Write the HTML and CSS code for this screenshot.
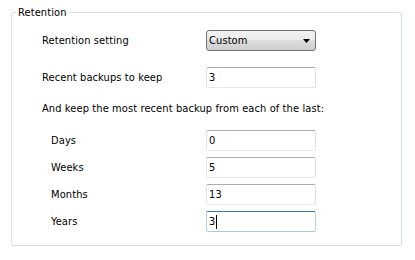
FILE: index.html
```html
<!DOCTYPE html>
<html lang="en">
<head>
    <meta charset="UTF-8">
    <title>Retention</title>
    <link rel="stylesheet" href="styles.css">
</head>
<body>
    <fieldset class="group">
        <legend class="group-title">Retention</legend>
        <div class="group-body">
            <div class="row">
                <span class="row-label">Retention setting</span>
                <div class="combo">
                    <span class="combo-text">Custom</span>
                    <svg class="combo-arrow" width="7" height="4" viewBox="0 0 7 4"><path d="M0 0h7L3.5 4z" fill="#000"/></svg>
                </div>
            </div>
            <div class="row row-gap">
                <span class="row-label">Recent backups to keep</span>
                <div class="field"><span>3</span></div>
            </div>
            <div class="note">And keep the most recent backup from each of the last:</div>
            <div class="sub-rows">
                <div class="row sub">
                    <span class="row-label">Days</span>
                    <div class="field"><span>0</span></div>
                </div>
                <div class="row sub">
                    <span class="row-label">Weeks</span>
                    <div class="field"><span>5</span></div>
                </div>
                <div class="row sub">
                    <span class="row-label">Months</span>
                    <div class="field"><span>13</span></div>
                </div>
                <div class="row sub">
                    <span class="row-label">Years</span>
                    <div class="field focused"><span>3</span><span class="caret"></span></div>
                </div>
            </div>
        </div>
    </fieldset>
</body>
</html>
```

FILE: styles.css
```css
* {
    margin: 0;
    padding: 0;
    box-sizing: border-box;
}

body {
    font-family: 'DejaVu Sans Condensed', 'DejaVu Sans', sans-serif;
    font-size: 11px;
    letter-spacing: 0.1px;
    color: #000;
    background: #fff;
    padding: 6px 0 0 11px;
    width: 415px;
    height: 260px;
}

.group {
    width: 391px;
    border: 1px solid #d5dfe5;
    border-radius: 3px;
    padding: 0;
}

.group-title {
    margin-left: 4px;
    padding: 0 2px;
    line-height: 13px;
}

.group-body {
    padding: 11px 0 13px 30px;
}

.row {
    display: flex;
    align-items: center;
    height: 21px;
}

.row-label {
    width: 164px;
    flex: none;
}

.row-gap {
    margin-top: 16px;
}

.note {
    height: 21px;
    line-height: 21px;
    margin-top: 10px;
}

.sub-rows {
    margin-top: 11px;
    display: flex;
    flex-direction: column;
    gap: 6px;
}

.sub .row-label {
    width: 164px;
    padding-left: 9px;
}

.combo {
    width: 110px;
    height: 21px;
    border: 1px solid #707070;
    border-radius: 3px;
    background: linear-gradient(to bottom, #f2f2f2 0%, #ebebeb 50%, #dddddd 50%, #cfcfcf 100%);
    display: flex;
    align-items: center;
    justify-content: space-between;
    padding: 0 5px 0 2px;
}

.combo-arrow {
    display: block;
}

.field {
    width: 110px;
    height: 21px;
    border: 1px solid #e2e3ea;
    border-top-color: #abadb3;
    border-left-color: #e2e3ea;
    border-bottom-color: #e3e9ef;
    border-radius: 2px;
    background: #fff;
    display: flex;
    align-items: center;
    padding-left: 2px;
}

.field.focused {
    border-color: #b5cfe7;
    border-top-color: #3d7bad;
    border-bottom-color: #a4c9e3;
}

.caret {
    width: 1px;
    height: 14px;
    background: #000;
    margin-left: 1px;
}
```
